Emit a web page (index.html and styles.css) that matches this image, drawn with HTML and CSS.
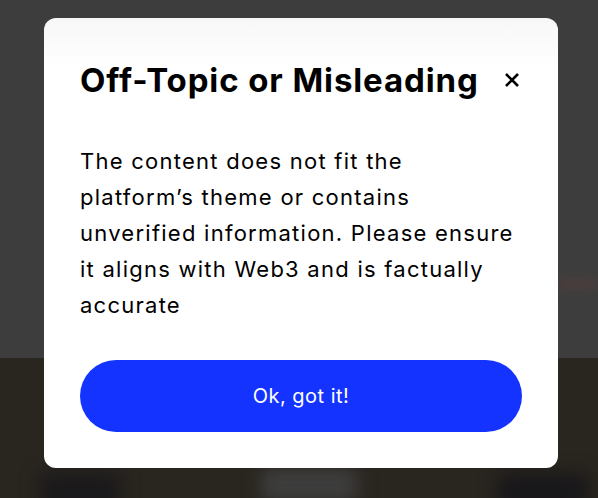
FILE: index.html
```html
<!DOCTYPE html>
<html>
	<head>
		<meta charset="UTF-8">
		<title>Off-Topic or Misleading</title>
		<link rel="stylesheet" href="styles.css">
	</head>
	<body>
		<div class="page">
			<div class="page-top">
				<span class="blur-line"></span>
			</div>
			<div class="page-bottom">
				<span class="blob blob-left"></span>
				<span class="blob blob-mid"></span>
				<span class="blob blob-right"></span>
			</div>
		</div>
		<div class="overlay">
			<div class="modal">
				<div class="modal-head">
					<h2 class="modal-title">Off-Topic or Misleading</h2>
					<a href="#" class="close" aria-label="Close">
						<svg width="16" height="16" viewBox="0 0 16 16">
							<path d="M2 2L14 14M14 2L2 14" stroke="#000" stroke-width="2.6" stroke-linecap="butt"/>
						</svg>
					</a>
				</div>
				<p class="modal-text">The content does not fit the platform’s theme or contains unverified information. Please ensure it aligns with Web3 and is factually accurate</p>
				<a href="#" class="btn">Ok, got it!</a>
			</div>
		</div>
	</body>
</html>
```
FILE: styles.css
```css
*{margin: 0;padding: 0;box-sizing: border-box;text-decoration: none;}
body{width: 598px;height: 498px;overflow: hidden;background: #3d3d3d;font-family: Inter, "Noto Sans", sans-serif;position: relative;}

.page{height: 498px;display: flex;flex-direction: column;}
.page-top{height: 358px;background: #3d3d3d;display: flex;justify-content: flex-end;align-items: center;}
.blur-line{width: 40px;height: 14px;margin-top: 210px;background: #4a3d3d;filter: blur(4px);}
.page-bottom{flex: 1;background: #29251f;display: flex;align-items: flex-end;justify-content: space-between;padding: 0 10px 0 40px;}
.blob{display: block;filter: blur(9px);}
.blob-left{width: 80px;height: 36px;background: #1a191b;margin-bottom: -12px;}
.blob-mid{width: 96px;height: 34px;background: #3e3e3e;margin-bottom: -4px;}
.blob-right{width: 90px;height: 36px;background: #18171a;margin-bottom: -12px;}

.overlay{position: absolute;top: 0;left: 0;width: 598px;height: 498px;padding: 18px 40px 0 44px;}
.modal{width: 514px;height: 450px;background: linear-gradient(#f7f7f7, #fff 50px);border-radius: 12px;padding: 42px 36px 36px 36px;display: flex;flex-direction: column;}
.modal-head{display: flex;justify-content: space-between;align-items: center;height: 40px;}
.modal-title{font-size: 33px;font-weight: 700;color: #000;letter-spacing: 0.9px;}
.close{display: flex;width: 18px;height: 18px;align-items: center;justify-content: center;margin-right: 1px;}
.modal-text{margin-top: 43px;font-size: 22px;line-height: 36px;color: #000;letter-spacing: 1.25px;}
.btn{margin-top: 37px;height: 72px;border-radius: 36px;background: #1433ff;color: #fff;font-size: 20px;letter-spacing: 0.5px;display: flex;align-items: center;justify-content: center;}
```
